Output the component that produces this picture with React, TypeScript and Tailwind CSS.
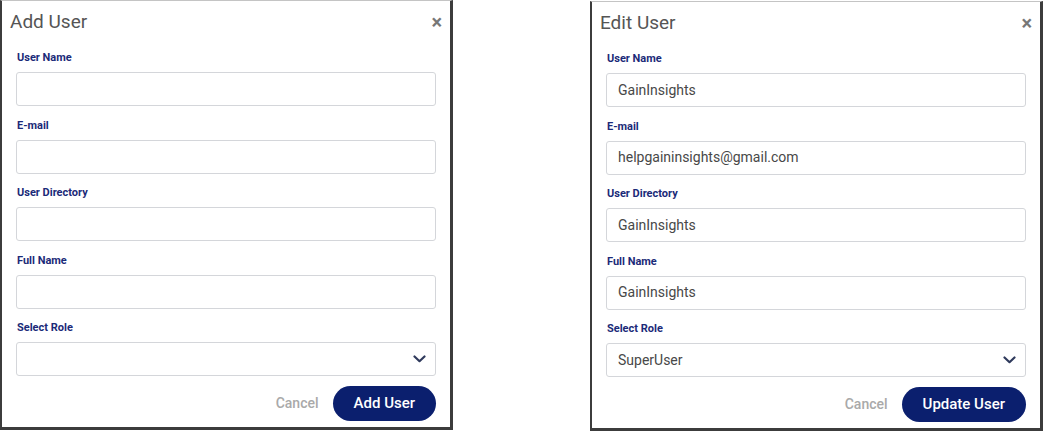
import React from "react";

type Field = { label: string; value?: string; select?: boolean };

function Chevron() {
  return (
    <svg width="13" height="8" viewBox="0 0 13 8" fill="none">
      <path d="M1.5 1.5L6.5 6.2L11.5 1.5" stroke="#2f3a5c" strokeWidth="2.2" strokeLinecap="round" strokeLinejoin="round" />
    </svg>
  );
}

function UserDialog({
  title,
  fields,
  action,
  className,
}: {
  title: string;
  fields: Field[];
  action: string;
  className?: string;
}) {
  return (
    <div
      className={
        "flex h-[430px] w-[453px] shrink-0 flex-col border-t border-l-2 border-r-[3px] border-b-[3px] border-[#3c3c3c] border-t-[#c4c4c4] bg-white " +
        (className ?? "")
      }
    >
      <div className="flex items-center justify-between pl-[8px] pr-[8px] pt-[8px]">
        <h2 className="text-[19px] leading-[26px] text-[#555]">{title}</h2>
        <span className="text-[20px] font-bold leading-[26px] text-[#777]">×</span>
      </div>

      <form className="mt-[16px] flex flex-col px-[14px]">
        {fields.map((f, i) => (
          <div key={f.label} className={i > 0 ? "mt-[12.5px]" : ""}>
            <label className="block pl-[1px] text-[11px] font-bold leading-[13px] text-[#1b2a78]">
              {f.label}
            </label>
            <div className="mt-[8px] flex h-[34px] items-center justify-between rounded-[3px] border border-[#d4d6da] pl-[11px] pr-[9px] text-[14px] text-[#484848]">
              <span>{f.value ?? ""}</span>
              {f.select && <Chevron />}
            </div>
          </div>
        ))}

        <div className="mt-[10px] flex items-center justify-end gap-[14px]">
          <button type="button" className="text-[14px] font-medium text-[#a9a9a9]">
            Cancel
          </button>
          <button
            type="button"
            className="h-[35px] rounded-full bg-[#0b1f6e] px-[21px] text-[15px] font-medium text-white"
          >
            {action}
          </button>
        </div>
      </form>
    </div>
  );
}

export default function App() {
  const empty: Field[] = [
    { label: "User Name" },
    { label: "E-mail" },
    { label: "User Directory" },
    { label: "Full Name" },
    { label: "Select Role", select: true },
  ];
  const filled: Field[] = [
    { label: "User Name", value: "GainInsights" },
    { label: "E-mail", value: "helpgaininsights@gmail.com" },
    { label: "User Directory", value: "GainInsights" },
    { label: "Full Name", value: "GainInsights" },
    { label: "Select Role", value: "SuperUser", select: true },
  ];

  return (
    <main
      className="flex h-[439px] w-[1043px] items-start bg-white"
      style={{ fontFamily: "Roboto, 'Liberation Sans', sans-serif" }}
    >
      <UserDialog title="Add User" fields={empty} action="Add User" />
      <UserDialog title="Edit User" fields={filled} action="Update User" className="ml-[137px] mt-[1px]" />
    </main>
  );
}
